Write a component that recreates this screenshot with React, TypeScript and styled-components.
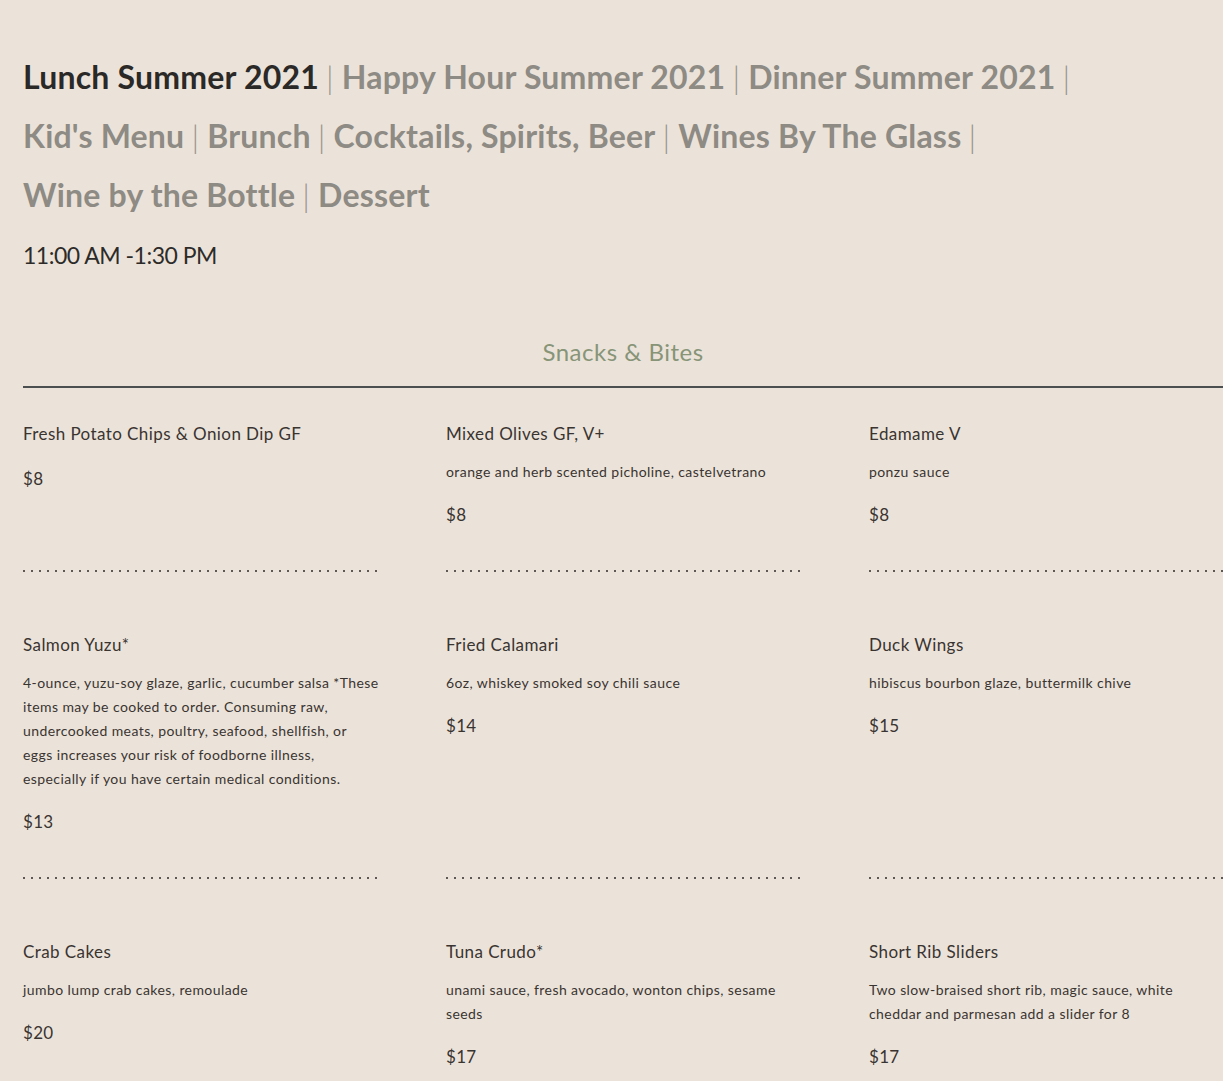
import React from "react";
import styled, { createGlobalStyle } from "styled-components";

const GlobalStyle = createGlobalStyle`
  html, body {
    margin: 0;
    padding: 0;
    background-color: #ebe3d9;
    overflow-x: hidden;
  }
  body {
    font-family: "Lato", "Open Sans", sans-serif;
    color: #3a3431;
  }
`;

const Page = styled.div`
  width: 1200px;
  padding: 47px 0 40px 23px;
`;

const Nav = styled.nav`
  font-size: 32px;
  line-height: 59px;
  font-weight: 700;
  letter-spacing: 0.2px;
`;

const NavLine = styled.div`
  white-space: nowrap;
`;

const NavLink = styled.a<{ $active?: boolean }>`
  color: ${(p) => (p.$active ? "#2b2927" : "#8e8a84")};
  text-decoration: none;
  cursor: pointer;
`;

const Sep = styled.span`
  color: #9a958f;
  font-weight: 300;
  margin: 0 8px 0 7px;
`;

const Hours = styled.div`
  margin-top: 16px;
  font-size: 23px;
  line-height: 30px;
  letter-spacing: -0.5px;
  color: #2d2b29;
`;

const SectionTitle = styled.h2`
  margin: 67px 0 0;
  font-size: 24px;
  line-height: 30px;
  font-weight: 400;
  letter-spacing: 0.5px;
  text-align: center;
  color: #879478;
`;

const Rule = styled.div`
  margin-top: 19px;
  height: 2px;
  background-color: #4b4f4f;
`;

const Grid = styled.div`
  display: grid;
  grid-template-columns: repeat(3, 357px);
  column-gap: 66px;
  row-gap: 61px;
  margin-top: 34px;
`;

const Item = styled.div`
  position: relative;
  padding-bottom: 45px;
  &::after {
    content: "";
    position: absolute;
    left: 0;
    right: 0;
    bottom: 0;
    height: 2px;
    background-image: repeating-linear-gradient(
      to right,
      #5e5854 0 2px,
      transparent 2px 8px
    );
  }
`;

const Name = styled.div`
  font-size: 17px;
  line-height: 24px;
  letter-spacing: 0.42px;
  color: #3a3431;
`;

const Desc = styled.div`
  margin-top: 14px;
  font-size: 14px;
  line-height: 24px;
  letter-spacing: 0.42px;
  color: #3a3431;
`;

const Price = styled.div<{ $afterDesc?: boolean }>`
  margin-top: ${(p) => (p.$afterDesc ? "19px" : "21px")};
  font-size: 17px;
  line-height: 24px;
  letter-spacing: 0.3px;
  color: #3a3431;
`;

interface MenuItem {
  name: string;
  desc?: string;
  price: string;
}

const navLines = [
  ["Lunch Summer 2021", "Happy Hour Summer 2021", "Dinner Summer 2021"],
  ["Kid's Menu", "Brunch", "Cocktails, Spirits, Beer", "Wines By The Glass"],
  ["Wine by the Bottle", "Dessert"],
];

const items: MenuItem[] = [
  { name: "Fresh Potato Chips & Onion Dip GF", price: "$8" },
  {
    name: "Mixed Olives GF, V+",
    desc: "orange and herb scented picholine, castelvetrano",
    price: "$8",
  },
  { name: "Edamame V", desc: "ponzu sauce", price: "$8" },
  {
    name: "Salmon Yuzu*",
    desc: "4-ounce, yuzu-soy glaze, garlic, cucumber salsa *These items may be cooked to order. Consuming raw, undercooked meats, poultry, seafood, shellfish, or eggs increases your risk of foodborne illness, especially if you have certain medical conditions.",
    price: "$13",
  },
  { name: "Fried Calamari", desc: "6oz, whiskey smoked soy chili sauce", price: "$14" },
  { name: "Duck Wings", desc: "hibiscus bourbon glaze, buttermilk chive", price: "$15" },
  { name: "Crab Cakes", desc: "jumbo lump crab cakes, remoulade", price: "$20" },
  {
    name: "Tuna Crudo*",
    desc: "unami sauce, fresh avocado, wonton chips, sesame seeds",
    price: "$17",
  },
  {
    name: "Short Rib Sliders",
    desc: "Two slow-braised short rib, magic sauce, white cheddar and parmesan add a slider for 8",
    price: "$17",
  },
];

const App = () => {
  const last = navLines.length - 1;
  return (
    <Page>
      <GlobalStyle />
      <Nav>
        {navLines.map((line, li) => (
          <NavLine key={li}>
            {line.map((label, i) => (
              <React.Fragment key={label}>
                <NavLink $active={li === 0 && i === 0}>{label}</NavLink>
                {(li < last || i < line.length - 1) && <Sep>|</Sep>}
              </React.Fragment>
            ))}
          </NavLine>
        ))}
      </Nav>
      <Hours>11:00 AM -1:30 PM</Hours>
      <SectionTitle>Snacks &amp; Bites</SectionTitle>
      <Rule />
      <Grid>
        {items.map((item) => (
          <Item key={item.name}>
            <Name>{item.name}</Name>
            {item.desc && <Desc>{item.desc}</Desc>}
            <Price $afterDesc={!!item.desc}>{item.price}</Price>
          </Item>
        ))}
      </Grid>
    </Page>
  );
};

export default App;
